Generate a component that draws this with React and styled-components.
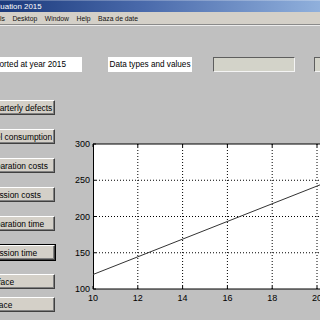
import React from "react";
import styled, { createGlobalStyle } from "styled-components";

const GlobalStyle = createGlobalStyle`
  html, body {
    margin: 0;
    padding: 0;
    background: #c0c0c0;
    overflow: hidden;
  }
  body {
    font-family: "Liberation Sans", Arial, sans-serif;
  }
`;

const Window = styled.div`
  width: 320px;
  height: 320px;
  overflow: hidden;
  display: flex;
  flex-direction: column;
  background: #c0c0c0;
`;

const TitleBar = styled.div`
  height: 12px;
  flex: none;
  display: flex;
  align-items: center;
  background: linear-gradient(90deg, #1b3a7c 0%, #4a6aab 45%, #90b0dc 100%);
  box-shadow: inset 0 1px 0 rgba(255, 255, 255, 0.25);
  color: #fff;
  font-size: 7.9px;
  white-space: nowrap;
`;

const TitleText = styled.span`
  margin-left: -15px;
`;

const MenuBar = styled.div`
  height: 12px;
  flex: none;
  display: flex;
  align-items: center;
  gap: 7.5px;
  background: #d4d0c8;
  border-bottom: 1px solid #8a8a8a;
  font-size: 6.8px;
  white-space: nowrap;
  color: #111;
`;

const MenuItem = styled.span`
  margin-left: ${(p) => p.$ml || 0}px;
`;

const MenuRule = styled.div`
  height: 1px;
  flex: none;
  background: #ececec;
`;

const TopRow = styled.div`
  display: flex;
  height: 15px;
  margin-top: 31px;
  flex: none;
`;

const Field = styled.div`
  flex: none;
  box-sizing: border-box;
  width: ${(p) => p.$w}px;
  margin-left: ${(p) => p.$ml}px;
  padding-left: 1.5px;
  background: #fff;
  font-size: 8.2px;
  line-height: 15px;
  white-space: nowrap;
  color: #000;
`;

const Sunken = styled.div`
  flex: none;
  box-sizing: border-box;
  width: ${(p) => p.$w}px;
  margin-left: ${(p) => p.$ml}px;
  background: #d3d3c9;
  border: 1px solid;
  border-color: #5e5e5e #f4f4f4 #f4f4f4 #5e5e5e;
`;

const LowerRow = styled.div`
  display: flex;
  align-items: flex-start;
  margin-top: 28px;
`;

const ButtonColumn = styled.div`
  flex: none;
  display: flex;
  flex-direction: column;
  gap: 14px;
  margin-left: -58px;
`;

/* the button spans x -58..55; $start is where its label begins */
const PushButton = styled.button`
  box-sizing: border-box;
  width: 113px;
  height: 15px;
  margin: ${(p) => p.$mt || 0}px 0 0;
  padding: 0 0 0 ${(p) => p.$start + 57}px;
  background: #d4d0c8;
  border: 1px solid;
  border-color: #fff #404040 #404040 #fff;
  box-shadow: ${(p) =>
    p.$default
      ? "0 0 0 1px #000, inset -1px -1px 0 #808080"
      : "inset -1px -1px 0 #808080"};
  font-family: "Liberation Sans", Arial, sans-serif;
  font-size: 8.4px;
  color: #000;
  text-align: left;
  white-space: nowrap;
  overflow: hidden;
`;

const ChartBox = styled.svg`
  flex: none;
  display: block;
  margin-left: 1px;
  overflow: hidden;
`;

const buttons = [
  { label: "Quarterly defects", start: -11.5 },
  { label: "Fuel consumption", start: -14 },
  { label: "Separation costs", start: -14.5 },
  { label: "Emission costs", start: -15 },
  { label: "Separation time", start: -14.5 },
  { label: "Emission time", start: -15, def: true },
  { label: "Interface", start: -18.5 },
  { label: "Surface", start: -16.5, mt: -6 },
];

const X0 = 37;
const sx = (u) => X0 + (u - 10) * 22.4;
const sy = (v) => 189 - (v - 100) * 0.725;

function Chart() {
  const xt = [10, 12, 14, 16, 18, 20];
  const yt = [100, 150, 200, 250, 300];
  return (
    <ChartBox width={264} height={220} viewBox="0 0 264 220">
      <rect x={X0} y={sy(300)} width={300} height={sy(100) - sy(300)} fill="#fff" />
      {xt.slice(1).map((u) => (
        <line key={"gx" + u} x1={sx(u)} x2={sx(u)} y1={sy(300)} y2={sy(100)}
          stroke="#000" strokeWidth={1} strokeDasharray="1 2" />
      ))}
      {yt.slice(1, -1).map((v) => (
        <line key={"gy" + v} x1={X0} x2={340} y1={sy(v)} y2={sy(v)}
          stroke="#000" strokeWidth={1} strokeDasharray="1 2" />
      ))}
      <path d={`M${X0 + 0.5} ${sy(300)} V${sy(100)} H340 M${X0} ${sy(300)} H340`} stroke="#000" strokeWidth={1} fill="none" />
      {xt.map((u) => (
        <g key={"tx" + u}>
          <line x1={sx(u)} x2={sx(u)} y1={sy(100)} y2={sy(100) - 3} stroke="#000" />
          <line x1={sx(u)} x2={sx(u)} y1={sy(300)} y2={sy(300) + 3} stroke="#000" />
          <text x={sx(u)} y={201} fontSize={9} textAnchor="middle" fill="#000"
            fontFamily="Liberation Sans, Arial, sans-serif">{u}</text>
        </g>
      ))}
      {yt.map((v) => (
        <g key={"ty" + v}>
          <line x1={X0} x2={X0 + 3} y1={sy(v)} y2={sy(v)} stroke="#000" />
          <text x={34} y={sy(v) + 3.2} fontSize={9} textAnchor="end" fill="#000"
            fontFamily="Liberation Sans, Arial, sans-serif">{v}</text>
        </g>
      ))}
      <line x1={sx(10)} y1={sy(120)} x2={sx(21)} y2={sy(254.2)} stroke="#333" strokeWidth={1} />
    </ChartBox>
  );
}

export default function App() {
  return (
    <>
      <GlobalStyle />
      <Window>
        <TitleBar>
          <TitleText>Evaluation 2015</TitleText>
        </TitleBar>
        <MenuBar>
          <MenuItem $ml={-11}>Tools</MenuItem>
          <MenuItem>Desktop</MenuItem>
          <MenuItem>Window</MenuItem>
          <MenuItem>Help</MenuItem>
          <MenuItem>Baza de date</MenuItem>
        </MenuBar>
        <MenuRule />
        <TopRow>
          <Field $w={99} $ml={-17}>Reported at year 2015</Field>
          <Field $w={84} $ml={26}>Data types and values</Field>
          <Sunken $w={82} $ml={21} />
          <Sunken $w={40} $ml={19} />
        </TopRow>
        <LowerRow>
          <ButtonColumn>
            {buttons.map((b) => (
              <PushButton key={b.label + b.start} $start={b.start} $mt={b.mt} $default={b.def}>
                {b.label}
              </PushButton>
            ))}
          </ButtonColumn>
          <Chart />
        </LowerRow>
      </Window>
    </>
  );
}
